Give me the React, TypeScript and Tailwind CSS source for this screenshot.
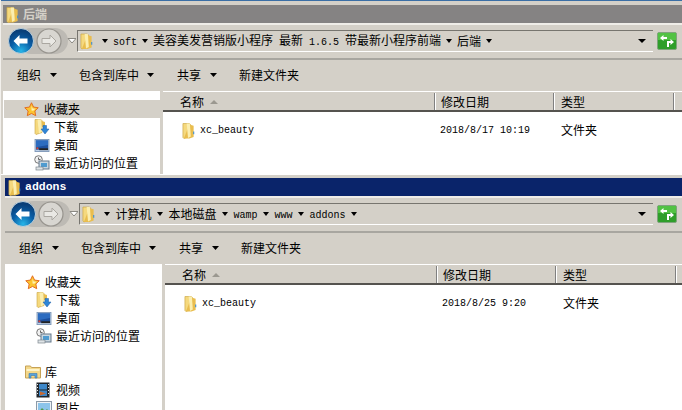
import React from 'react';

const MONO = "font-['Liberation_Mono','Noto_Sans_CJK_SC',monospace] text-[10px]";

const Folder = ({ className = '' }: { className?: string }) => (
  <svg viewBox="0 0 14 18" className={className}>
    <path d="M1 1.5h7l1 1v13l-7 2-1-1z" fill="#f5d97e" stroke="#c9a43f" strokeWidth="0.7" />
    <path d="M8 2.5l4.5 1.5v12L8 17.5H2z" fill="#e9bd4e" />
    <path d="M5 1.5h3.5l1 14-3 1.5z" fill="#fbeeb0" />
    <path d="M12 10h1.2v3H12z" fill="#3f8fd0" />
  </svg>
);

const Star = () => (
  <svg viewBox="0 0 16 16" className="h-[15px] w-[15px] shrink-0">
    <path d="M8 .8l2.2 4.6 5 .7-3.6 3.5.9 5L8 12.2l-4.5 2.4.9-5L.8 6.1l5-.7z" fill="#fbc531" stroke="#e2691e" strokeWidth="1" />
    <path d="M8 4l1.2 3 3 .3L9.8 9.4 8 9z" fill="#fff1b0" />
  </svg>
);

const Downloads = () => (
  <svg viewBox="0 0 16 16" className="h-4 w-4 shrink-0">
    <path d="M1 .5h6l1 1v12l-6 2-1-1z" fill="#f5d97e" stroke="#c9a43f" strokeWidth="0.6" />
    <path d="M3.5.5H7l1 12-3 2z" fill="#fbeeb0" />
    <path d="M8 2l3 1v5H8z" fill="#e9bd4e" />
    <path d="M9 6.5h3.5V10H15l-4 5-4-5h2z" fill="#2f86d6" stroke="#1b5da6" strokeWidth="0.5" />
  </svg>
);

const Desktop = () => (
  <svg viewBox="0 0 16 14" className="h-[13px] w-4 shrink-0">
    <rect x="0.5" y="0.5" width="15" height="13" fill="#bcd0e8" stroke="#7f98b8" />
    <rect x="1.5" y="1.5" width="13" height="10" fill="#1d4f9c" />
    <path d="M1.5 1.5h13v5L1.5 9z" fill="#2c6cc0" />
    <rect x="5" y="10" width="9.5" height="2" fill="#222" />
    <rect x="2" y="9" width="2" height="2" fill="#e2452f" />
  </svg>
);

const Recent = () => (
  <svg viewBox="0 0 16 16" className="h-4 w-4 shrink-0">
    <circle cx="4.5" cy="4.5" r="3.8" fill="#f1f1f1" stroke="#777" />
    <path d="M4.5 2.5v2h2" stroke="#444" fill="none" strokeWidth="0.8" />
    <rect x="5" y="6" width="10" height="8" fill="#c8d6e0" stroke="#66788a" />
    <rect x="7" y="8" width="6" height="4" fill="#4f9bd0" />
    <rect x="2" y="12" width="7" height="3" fill="#dfe3e6" stroke="#7d868e" strokeWidth="0.7" />
  </svg>
);

const Library = () => (
  <svg viewBox="0 0 16 14" className="h-[14px] w-4 shrink-0">
    <path d="M.5 2V1h5l1 1.5h9V13H.5z" fill="#f4d88a" stroke="#c6a256" />
    <path d="M1.500 4h13v2h-13z" fill="#fdf3c9" />
    <path d="M4 13V8.500h8V13h-2v-2.500H6V13z" fill="#5aa3dc" stroke="#3a78ae" strokeWidth="0.6" />
  </svg>
);

const Video = () => (
  <svg viewBox="0 0 14 16" className="h-4 w-[14px] shrink-0">
    <rect x="0.5" y="0.5" width="13" height="15" fill="#20262c" />
    <rect x="3" y="2" width="8" height="5.5" fill="#3d87c8" />
    <rect x="3" y="8.5" width="8" height="5.5" fill="#3d87c8" />
    <path d="M4 9.500l6 2-6 2z" fill="#c9682f" />
    <path d="M1 2h1v1H1zM1 5h1v1H1zM1 8h1v1H1zM1 11h1v1H1zM12 2h1v1h-1zM12 5h1v1h-1zM12 8h1v1h-1zM12 11h1v1h-1z" fill="#e6e6e6" />
  </svg>
);

const Picture = () => (
  <svg viewBox="0 0 16 14" className="h-[14px] w-4 shrink-0">
    <rect x="0.5" y="0.5" width="15" height="13" fill="#eef3f7" stroke="#8c9aa8" />
    <rect x="2" y="2" width="12" height="10" fill="#8cc4ea" />
    <path d="M2 12l4-5 3 3 2-2 3 4z" fill="#4f9a48" />
  </svg>
);

const Caret = ({ className = '' }: { className?: string }) => (
  <svg viewBox="0 0 7 4" preserveAspectRatio="none" className={`h-1 shrink-0 ${className}`}>
    <path d="M0 0h7L3.5 4z" fill="#000" />
  </svg>
);

const NavButtons = () => (
  <svg viewBox="0 0 68 28" className="h-7 w-[68px] shrink-0">
    <defs>
      <radialGradient id="navBack" cx="50%" cy="90%" r="80%">
        <stop offset="0%" stopColor="#27b5e8" />
        <stop offset="55%" stopColor="#0a5ea6" />
        <stop offset="100%" stopColor="#0a3f78" />
      </radialGradient>
    </defs>
    <rect x="10" y="1" width="50" height="26" rx="13" fill="#bdbab4" />
    <circle cx="13" cy="14" r="12.500" fill="url(#navBack)" stroke="#bcd0dc" />
    <path d="M5.500 14l6-6v3.500h8v5h-8V20z" fill="#fff" />
    <circle cx="41" cy="14" r="12" fill="#d8d6d1" stroke="#97948e" strokeWidth="1.2" />
    <path d="M48 14l-6-6v3.500h-8v5h8V20z" fill="#e9e8e4" stroke="#aaa7a1" />
    <path d="M60 11.500h8L64 16z" fill="#fff" stroke="#8b8983" />
  </svg>
);

const Refresh = () => (
  <svg viewBox="0 0 20 18" className="h-[18px] w-5 shrink-0">
    <rect x="0.500" y="0.500" width="19" height="17" rx="1.500" fill="#2f9e2a" stroke="#7fa47c" />
    <path d="M1 1h18v7H1z" fill="#52c244" />
    <path d="M3 6l3.500-3v2H10v2H6.500v2zM17 10l-3.500-3v2H10v6h2v-4h1.500v2z" fill="#fff" />
  </svg>
);

const SideRow = ({ icon, label, sel, top }: { icon: React.ReactNode; label: string; sel?: boolean; top?: boolean }) => (
  <div className={`flex h-[18px] items-center ${top ? 'pl-[20px]' : 'pl-[31px]'} ${sel ? 'ml-px bg-[#d4d0c8]' : ''}`}>
    <span className="flex w-[20px] shrink-0 items-center">{icon}</span>
    <span>{label}</span>
  </div>
);

const Toolbar = () => (
  <div className="flex h-[31px] items-center pb-px pl-[14px] text-black">
    <span>组织</span>
    <Caret className="ml-[9px] mr-[22px] w-[7px]" />
    <span>包含到库中</span>
    <Caret className="ml-[8px] mr-[23px] w-[7px]" />
    <span>共享</span>
    <Caret className="ml-[9px] mr-[22px] w-[7px]" />
    <span>新建文件夹</span>
  </div>
);

const Header = () => (
  <div className="flex h-[21px] border-b-2 border-[#55534f] border-t border-t-white bg-[#d4d0c8] pt-px">
    <div className="flex w-[272px] items-center border-r border-[#808080] pl-[17px]">
      <span>名称</span>
      <svg viewBox="0 0 8 4" className="ml-[6px] h-1 w-2"><path d="M4 0l4 4H0z" fill="#9b9890" /></svg>
    </div>
    <div className="flex w-[119px] items-center border-r border-[#808080] border-l border-l-white pl-[5px]">修改日期</div>
    <div className="flex w-[120px] items-center border-r border-[#808080] border-l border-l-white pl-[6px]">类型</div>
    <div className="flex-1 border-l border-white" />
  </div>
);

interface WinProps {
  title: string;
  crumbs: React.ReactNode[];
  date: string;
  active?: boolean;
  extra?: boolean;
  className: string;
}

const Win = ({ title, crumbs, date, active, extra, className }: WinProps) => (
  <div className={`flex flex-col overflow-hidden bg-[#d4d0c8] ${className}`}>
    <div className={`flex h-[18px] shrink-0 items-center gap-[4px] pl-[3px] ${active ? 'bg-[#0a246a]' : 'bg-[#858383]'}`}>
      <Folder className="h-[17px] w-[13px] shrink-0" />
      {active ? (
        <span className="font-['Liberation_Mono',monospace] text-[11.5px] font-bold text-white">{title}</span>
      ) : (
        <span className="font-bold text-[#d4d0c8]">{title}</span>
      )}
    </div>
    <div className="flex h-[37px] shrink-0 items-center border-y-2 border-y-[#a8a6a0] border-t-[#efede8] pb-px pl-[5px] pr-[5px]">
      <NavButtons />
      <div className={`ml-px flex h-[22px] min-w-0 flex-1 items-center border-l border-t border-[#77756f] border-b border-b-white pl-[2px] ${active ? 'gap-[5.5px]' : 'gap-[5px]'}`}>
        <Folder className={`h-[18px] w-[13px] shrink-0 ${active ? 'mr-[3.5px]' : 'mr-[4px]'}`} />
        {crumbs.map((crumb, i) => (
          <React.Fragment key={i}>
            <Caret className="w-[6px]" />
            <span className="whitespace-pre">{crumb}</span>
          </React.Fragment>
        ))}
        <Caret className="w-[6px]" />
        <Caret className="ml-auto mr-[7px] w-[8px]" />
      </div>
      <div className="ml-[4px]"><Refresh /></div>
    </div>
    <Toolbar />
    <div className="flex min-h-0 flex-1 bg-white">
      <div className="w-[157px] shrink-0 overflow-hidden pt-[9px]">
        <SideRow top sel={!active} icon={<Star />} label="收藏夹" />
        <SideRow icon={<Downloads />} label="下载" />
        <SideRow icon={<Desktop />} label="桌面" />
        <SideRow icon={<Recent />} label="最近访问的位置" />
        {extra && (
          <div className="mt-[18px]">
            <SideRow top icon={<Library />} label="库" />
            <SideRow icon={<Video />} label="视频" />
            <SideRow icon={<Picture />} label="图片" />
          </div>
        )}
      </div>
      <div className="w-[3px] shrink-0 bg-[#d4d0c8]" />
      <div className="min-w-0 flex-1">
        <Header />
        <div className="flex items-center pt-[10px]">
          <span className="flex w-[272px] items-center pl-[19px]">
            <Folder className="mr-[5px] h-[17px] w-[13px] shrink-0" />
            <span className={MONO}>xc_beauty</span>
          </span>
          <span className={`w-[120px] pl-[5px] ${MONO}`}>{date}</span>
          <span className="-mt-px pl-[6px]">文件夹</span>
        </div>
      </div>
    </div>
  </div>
);

const m = (s: string) => <span className={MONO}>{s}</span>;

export default function App() {
  return (
    <div className="flex h-[410px] w-[682px] flex-col overflow-hidden border-l border-[#f2f0ec] bg-[#d4d0c8] font-['Noto_Sans_CJK_SC',sans-serif] text-[12px] leading-none text-black">
      <div className="h-px shrink-0 bg-[#3a6ea5]" />
      <Win
        className="h-[173px] shrink-0 pl-[2px] pt-[4px]"
        title="后端"
        date="2018/8/17 10:19"
        crumbs={[
          m('soft'),
          <>美容美发营销版小程序{m(' ')}最新{m(' 1.6.5 ')}带最新小程序前端</>,
          '后端',
        ]}
      />
      <div className="h-px shrink-0 bg-white" />
      <Win
        active
        extra
        className="min-h-0 flex-1 pl-[4px] pt-[3px]"
        title="addons"
        date="2018/8/25 9:20"
        crumbs={['计算机', '本地磁盘', m('wamp'), m('www'), m('addons')]}
      />
    </div>
  );
}
